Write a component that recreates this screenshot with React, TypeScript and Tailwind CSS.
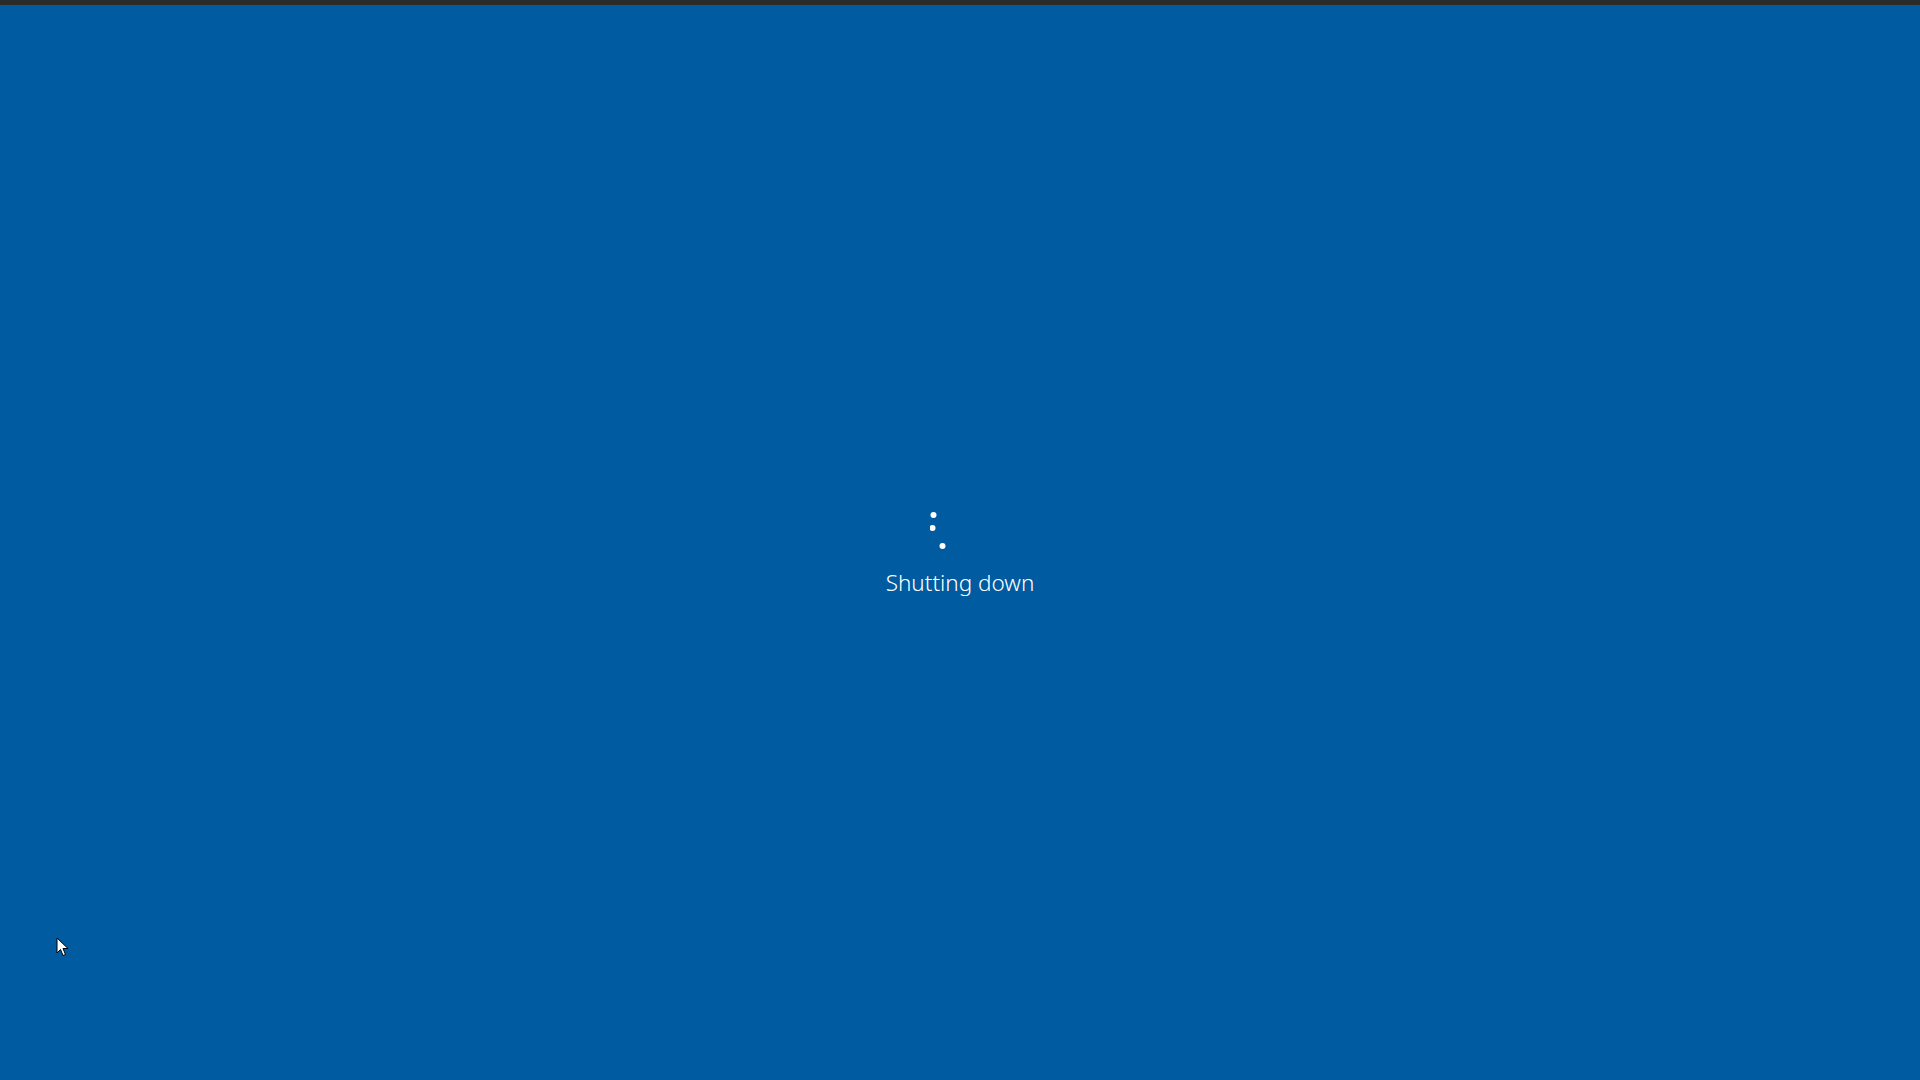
export default function App() {
  return (
    <div className="flex h-[1080px] w-[1920px] flex-col overflow-hidden bg-[#005ba1]">
      <div className="h-[5px] w-full bg-[#2b2b2b]" />

      <div className="relative flex flex-1 items-center justify-center pt-[23px]">
        <div className="flex flex-col items-center">
          <svg width="60" height="40" viewBox="0 0 60 40" className="block">
            <circle cx="3.5" cy="5" r="3" fill="#ffffff" />
            <circle cx="2.5" cy="18" r="3" fill="#ffffff" />
            <circle cx="12.5" cy="36" r="3" fill="#ffffff" />
          </svg>

          <p className="mt-[18px] font-['Noto_Sans',sans-serif] text-[22.5px] font-light leading-[30px] text-white">
            Shutting down
          </p>
        </div>

        {/* mouse pointer */}
        <svg
          width="13"
          height="20"
          viewBox="0 0 13 20"
          className="absolute left-[56px] top-[932px]"
        >
          <path
            d="M1 1 L1 16 L4.5 12.5 L7 18.5 L9.5 17.5 L7 11.5 L12 11.5 Z"
            fill="#ffffff"
            stroke="#000000"
            strokeWidth="1"
            strokeLinejoin="round"
          />
        </svg>
      </div>
    </div>
  );
}
